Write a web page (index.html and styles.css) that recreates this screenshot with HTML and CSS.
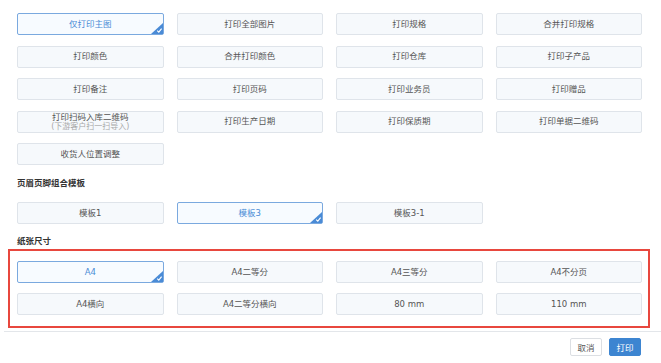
FILE: index.html
```html
<!DOCTYPE html>
<html lang="zh">
<head>
<meta charset="utf-8">
<link rel="stylesheet" href="styles.css">
</head>
<body>
<div class="page">
  <div class="grid opts">
    <div class="opt active">仅打印主图<span class="tick"><svg viewBox="0 0 12 11" width="12" height="11"><polygon points="12,0 12,11 0,11" fill="#4a8bd6"/><path d="M6.2 7.6 L7.8 9.2 L10.6 5.6" fill="none" stroke="#fff" stroke-width="1.1"/></svg></span></div>
    <div class="opt">打印全部图片</div>
    <div class="opt">打印规格</div>
    <div class="opt">合并打印规格</div>
    <div class="opt">打印颜色</div>
    <div class="opt">合并打印颜色</div>
    <div class="opt">打印仓库</div>
    <div class="opt">打印子产品</div>
    <div class="opt">打印备注</div>
    <div class="opt">打印页码</div>
    <div class="opt">打印业务员</div>
    <div class="opt">打印赠品</div>
    <div class="opt two"><span class="main">打印扫码入库二维码</span><span class="sub">(下游客户扫一扫导入)</span></div>
    <div class="opt">打印生产日期</div>
    <div class="opt">打印保质期</div>
    <div class="opt">打印单据二维码</div>
    <div class="opt">收货人位置调整</div>
  </div>
  <div class="title t1">页眉页脚组合模板</div>
  <div class="grid">
    <div class="opt">模板1</div>
    <div class="opt active">模板3<span class="tick"><svg viewBox="0 0 12 11" width="12" height="11"><polygon points="12,0 12,11 0,11" fill="#4a8bd6"/><path d="M6.2 7.6 L7.8 9.2 L10.6 5.6" fill="none" stroke="#fff" stroke-width="1.1"/></svg></span></div>
    <div class="opt">模板3-1</div>
  </div>
  <div class="title t2">纸张尺寸</div>
  <div class="redbox">
    <div class="grid">
      <div class="opt active">A4<span class="tick"><svg viewBox="0 0 12 11" width="12" height="11"><polygon points="12,0 12,11 0,11" fill="#4a8bd6"/><path d="M6.2 7.6 L7.8 9.2 L10.6 5.6" fill="none" stroke="#fff" stroke-width="1.1"/></svg></span></div>
      <div class="opt">A4二等分</div>
      <div class="opt">A4三等分</div>
      <div class="opt">A4不分页</div>
      <div class="opt">A4横向</div>
      <div class="opt">A4二等分横向</div>
      <div class="opt">80 mm</div>
      <div class="opt">110 mm</div>
    </div>
  </div>
  <div class="footer">
    <button class="btn">取消</button>
    <button class="btn primary">打印</button>
  </div>
</div>
</body>
</html>
```
FILE: styles.css
```css
html, body {
  margin: 0;
  padding: 0;
  background: #fff;
}
body {
  font-family: "DejaVu Sans", "Noto Sans CJK SC", sans-serif;
  font-size: 8.5px;
  color: #555;
}
.page {
  width: 661px;
  height: 363px;
  overflow: hidden;
  padding-top: 13px;
  box-sizing: border-box;
}
.grid {
  display: grid;
  grid-template-columns: repeat(4, 146.5px);
  column-gap: 13px;
  row-gap: 10.5px;
  padding-left: 17px;
}
.opt {
  position: relative;
  height: 22px;
  box-sizing: border-box;
  border: 1px solid #dfe4ea;
  border-radius: 2px;
  background: #f6f9fc;
  display: flex;
  align-items: center;
  justify-content: center;
  color: #555;
  line-height: 1;
}
.opt.two {
  flex-direction: column;
  justify-content: center;
}
.opt.two .main,
.opt.two .sub {
  display: block;
  height: 10px;
  line-height: 10px;
  overflow: visible;
}
.opt.two .main {
  font-size: 8.5px;
}
.opt.two .sub {
  font-size: 8px;
  color: #a8a8a8;
}
.opt.active {
  border-color: #7aa9df;
  color: #4a8bd6;
  background: #f7fbff;
}
.tick {
  position: absolute;
  right: 0;
  bottom: 0;
  width: 12px;
  height: 11px;
  display: block;
}
.tick svg {
  display: block;
}
.title {
  font-weight: bold;
  color: #333;
  padding-left: 17px;
  line-height: 12px;
}
.t1 {
  margin-top: 12px;
  margin-bottom: 13px;
}
.t2 {
  margin-top: 11px;
  margin-bottom: 2px;
}
.redbox {
  margin-left: 8px;
  width: 642px;
  box-sizing: border-box;
  border: 2px solid #e8473e;
  padding: 10px 0 10.5px 0;
}
.redbox .grid {
  padding-left: 7px;
  row-gap: 10px;
}
.footer {
  margin-top: 3px;
  margin-left: 4px;
  border-top: 1px solid #e3e6ea;
  display: flex;
  justify-content: flex-end;
  gap: 7px;
  padding: 6px 20px 0 0;
}
.btn {
  font-family: inherit;
  font-size: 8.5px;
  height: 18px;
  width: 32px;
  padding: 0;
  border: 1px solid #dcdfe3;
  background: #fff;
  color: #555;
  border-radius: 2px;
}
.btn.primary {
  background: #3d85d1;
  border-color: #3d85d1;
  color: #fff;
}
```
